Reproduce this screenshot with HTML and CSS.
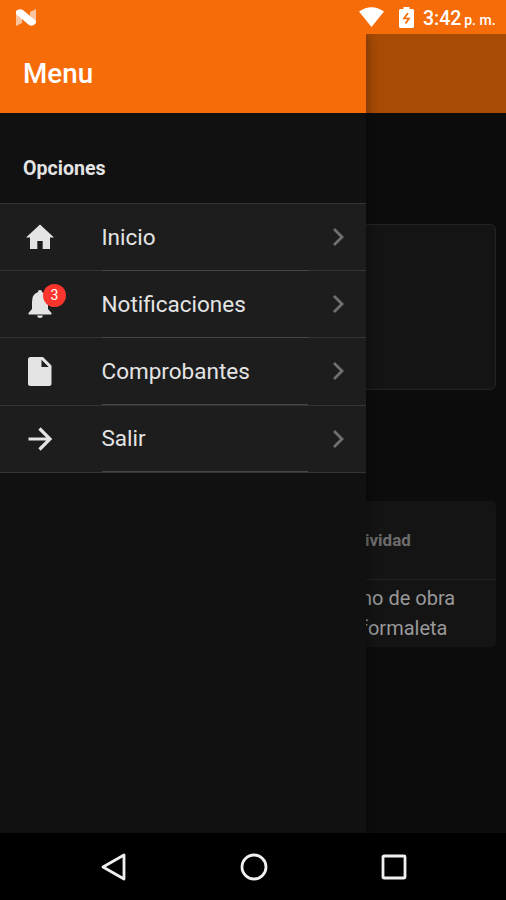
FILE: index.html
```html
<!DOCTYPE html>
<html lang="es">
<head>
    <meta charset="utf-8">
    <title>Menu</title>
    <link rel="stylesheet" href="styles.css">
</head>
<body>
    <!-- barra de estado -->
    <div class="status">
        <svg class="status-logo" width="21" height="17" viewBox="0 0 21 17">
            <path d="M0 2L6 7V14L0 17ZM14 3L20 0V14L14 11Z" fill="#fff" opacity=".6"/>
            <path d="M0 2Q3-1 7 1L20 12V14Q17 18 13 16L0 5Z" fill="#fff"/>
        </svg>
        <svg class="status-wifi" width="25" height="20" viewBox="0 0 25 20">
            <path d="M0 4.500Q12.500-4 25 4.500L12.500 20Z" fill="#fff"/>
        </svg>
        <svg class="status-battery" width="15" height="21" viewBox="0 0 15 21">
            <path d="M4.500 0H10.500V2H13.500Q15 2 15 3.500V19.500Q15 21 13.500 21H1.500Q0 21 0 19.500V3.500Q0 2 1.500 2H4.500Z" fill="#fff"/>
            <path d="M9 6L5 11.500H10L6.500 16.500" fill="none" stroke="#f66c08" stroke-width="1.700"/>
        </svg>
        <span class="clock">3:42 <small>p. m.</small></span>
    </div>

    <div class="app">
        <!-- menu lateral -->
        <div class="menu">
            <div class="menu-title">Menu</div>
            <div class="menu-header">Opciones</div>
            <div class="list">
                <div class="item">
                    <svg class="icon" width="28" height="28" viewBox="0 0 28 28"><path d="M11.300 26V18H16.700V26H24V14.500H28L14 1.500L0 14.500H4V26Z"/></svg>
                    <div class="label">Inicio</div>
                    <svg class="chevron" width="12" height="20" viewBox="0 0 12 20"><path d="M2 2L10 10L2 18"/></svg>
                </div>
                <div class="item">
                    <div class="icon-box">
                        <svg class="icon" width="28" height="28" viewBox="0 0 28 28"><path d="M14 0Q16 0 16.200 2.200Q22 4 22 12V19L25.500 23V24.500H2.500V23L6 19V12Q6 4 11.800 2.200Q12 0 14 0ZM11 25.500H17Q16.500 28 14 28Q11.500 28 11 25.500Z"/></svg>
                        <span class="badge">3</span>
                    </div>
                    <div class="label">Notificaciones</div>
                    <svg class="chevron" width="12" height="20" viewBox="0 0 12 20"><path d="M2 2L10 10L2 18"/></svg>
                </div>
                <div class="item">
                    <svg class="icon" width="28" height="28" viewBox="0 0 28 28"><path fill-rule="evenodd" d="M4.500 0H17L25.500 8.500V26.500Q25.500 29 23 29H4.500Q2 29 2 26.500V2.500Q2 0 4.500 0ZM15.500 2.800V10H22.700Z"/></svg>
                    <div class="label">Comprobantes</div>
                    <svg class="chevron" width="12" height="20" viewBox="0 0 12 20"><path d="M2 2L10 10L2 18"/></svg>
                </div>
                <div class="item">
                    <svg class="icon icon-line" width="28" height="28" viewBox="0 0 28 28"><path d="M2.500 14H24M13.500 3.500L24 14L13.500 24.500"/></svg>
                    <div class="label">Salir</div>
                    <svg class="chevron" width="12" height="20" viewBox="0 0 12 20"><path d="M2 2L10 10L2 18"/></svg>
                </div>
            </div>
        </div>

        <!-- pagina detras del menu -->
        <div class="page">
            <div class="page-toolbar"></div>
            <div class="card"></div>
            <div class="table">
                <div class="th">ividad</div>
                <div class="td">no de obra<br>formaleta</div>
            </div>
        </div>
    </div>

    <!-- botones de navegacion -->
    <div class="nav">
        <svg width="26" height="28" viewBox="0 0 26 28"><path d="M23 2V26L2 14Z"/></svg>
        <svg width="28" height="28" viewBox="0 0 28 28"><circle cx="14" cy="14" r="12"/></svg>
        <svg width="26" height="28" viewBox="0 0 26 28"><rect x="2" y="3" width="22" height="22" rx="1"/></svg>
    </div>
</body>
</html>
```

FILE: styles.css
```css
* {
    box-sizing: border-box;
}
body {
    margin: 0;
    height: 900px;
    display: flex;
    flex-direction: column;
    background: #111;
    color: #e4e4e4;
    font-family: Roboto, "Liberation Sans", sans-serif;
    overflow: hidden;
}

/* barra de estado */
.status {
    height: 34px;
    display: flex;
    align-items: center;
    padding: 0 10px 0 16px;
    background: #f66c08;
    color: #fff;
}
.status-wifi {
    margin-left: auto;
    margin-right: 15px;
}
.status-battery {
    margin-right: 9px;
}
.clock {
    width: 73px;
    padding-top: 3px;
    font-size: 19.5px;
    font-weight: 500;
    white-space: nowrap;
}
.clock small {
    margin-left: -2px;
    font-size: 14px;
}

.app {
    flex: 1;
    display: flex;
    min-height: 0;
}

/* menu lateral */
.menu {
    width: 366px;
    z-index: 1;
    background: #111;
    box-shadow: 0 0 12px rgba(0, 0, 0, .4);
    clip-path: inset(0 -12px 0 0);
}
.menu-title {
    height: 79px;
    padding-left: 23px;
    line-height: 80px;
    background: #f66c08;
    color: #fff;
    font-size: 27.8px;
    font-weight: 500;
}
.menu-header {
    height: 90px;
    padding: 44px 23px 0;
    line-height: 24px;
    font-size: 19.6px;
    font-weight: 700;
}
.list {
    border-top: 1px solid #343434;
}
.item {
    height: 67.2px;
    display: flex;
    padding-left: 26px;
    align-items: center;
    background: #1d1d1d;
    border-bottom: 1px solid #343434;
}
.icon {
    display: block;
    overflow: visible;
    fill: #e4e4e4;
}
.icon-line path {
    fill: none;
    stroke: #e4e4e4;
    stroke-width: 3.2;
}
.icon-box {
    position: relative;
}
.badge {
    position: absolute;
    left: 17px;
    top: -6px;
    width: 23px;
    height: 23px;
    border-radius: 50%;
    background: #f9352d;
    color: #fff;
    font-size: 14px;
    line-height: 23px;
    text-align: center;
}
.label {
    width: 206px;
    height: 67.2px;
    margin: 0 24px 0 47.5px;
    line-height: 67px;
    font-size: 22.5px;
    border-bottom: 1px solid #464646;
}
.chevron path {
    fill: none;
    stroke: #707070;
    stroke-width: 2.8;
}

/* pagina detras del menu */
.page {
    width: 140px;
    overflow: hidden;
    background: #0c0c0c;
}
.page-toolbar {
    height: 79px;
    background: #a84b05;
}
.card {
    height: 166px;
    margin: 111px 10px 0 -10px;
    border: 1.5px solid #242424;
    border-radius: 6px;
    background: #141414;
}
.table {
    height: 146px;
    margin: 111px 10px 0 -10px;
    border-radius: 5px;
    background: #141414;
}
.th {
    height: 79px;
    padding-left: 9px;
    line-height: 78px;
    border-bottom: 1px solid #242424;
    color: #6c6c6c;
    font-size: 17px;
    font-weight: 700;
}
.td {
    padding: 3px 0 0 5px;
    line-height: 30px;
    color: #999;
    font-size: 20px;
    white-space: nowrap;
}

/* botones de navegacion */
.nav {
    height: 67px;
    display: flex;
    justify-content: space-between;
    align-items: center;
    padding: 0 99px 0 101px;
    background: #000;
}
.nav svg {
    fill: none;
    stroke: #f0f0f0;
    stroke-width: 2.8;
    stroke-linejoin: round;
}
```
